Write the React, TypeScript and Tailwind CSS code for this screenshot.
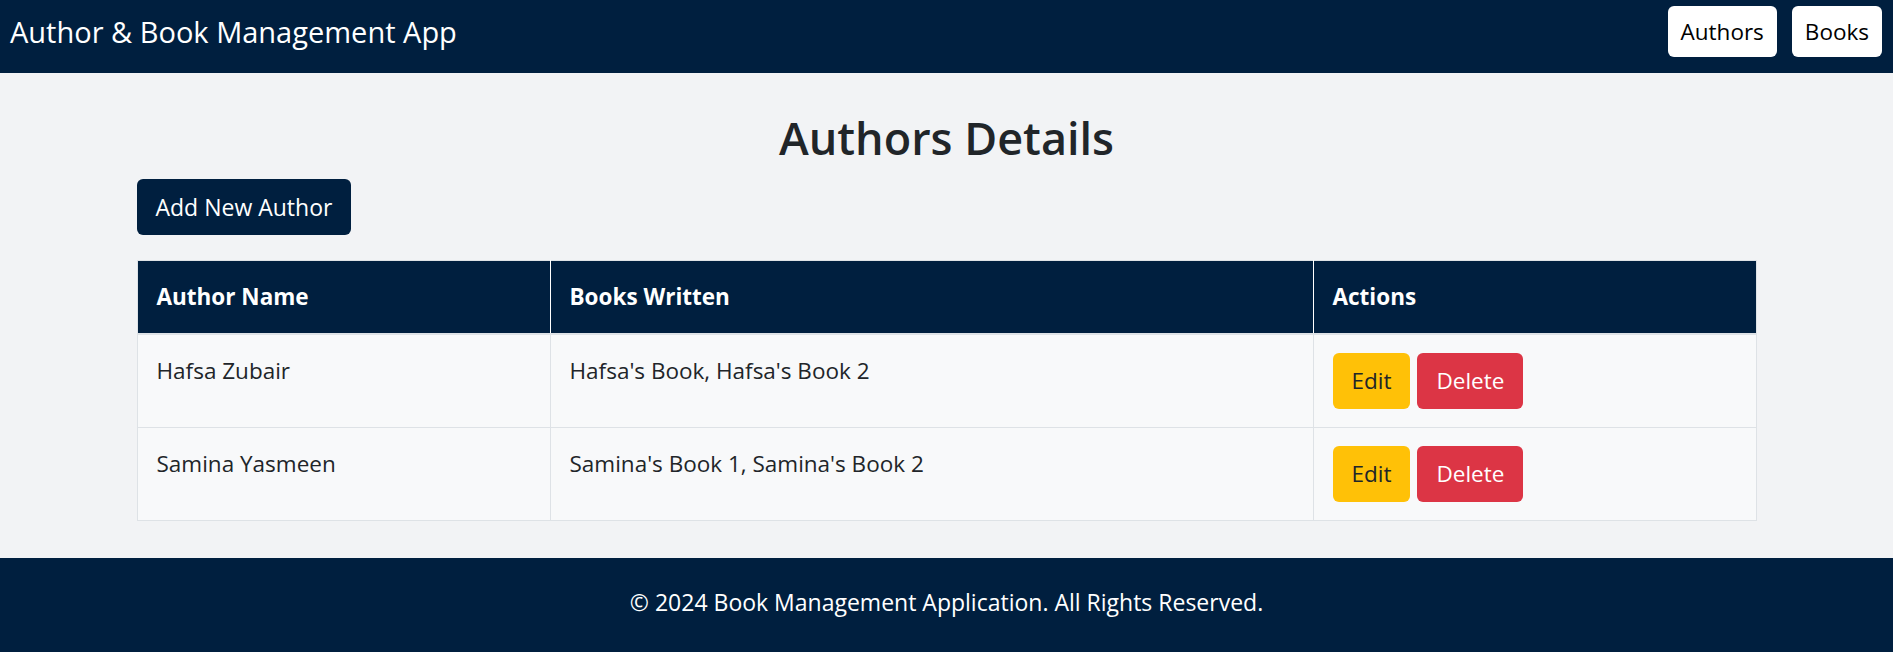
import React from "react";

const rows = [
  { name: "Hafsa Zubair", books: "Hafsa's Book, Hafsa's Book 2" },
  { name: "Samina Yasmeen", books: "Samina's Book 1, Samina's Book 2" },
];

export default function App() {
  return (
    <div
      className="min-h-screen flex flex-col bg-[#f2f3f5] text-[#212529]"
      style={{ fontFamily: '"Open Sans", "Noto Sans", sans-serif' }}
    >
      <header className="bg-[#001f3f] flex items-center justify-between pl-[10px] pr-[11px] pt-[6px] pb-[16px]">
        <h1 className="text-[29px] leading-[40px] text-white font-normal">
          Author &amp; Book Management App
        </h1>
        <nav className="flex gap-[15px]">
          <button className="h-[51px] px-[13px] bg-white text-black rounded-[6px] text-[22.5px] font-medium">
            Authors
          </button>
          <button className="h-[51px] px-[13px] bg-white text-black rounded-[6px] text-[22.5px] font-medium">
            Books
          </button>
        </nav>
      </header>

      <main className="flex-1 w-full max-w-[1650px] mx-auto px-[15px] pt-[38px] pb-[37px]">
        <h2 className="text-center text-[45px] leading-[53px] font-semibold text-[#212529]">
          Authors Details
        </h2>
        <button className="mt-[15px] h-[56px] px-[19px] bg-[#001f3f] text-white rounded-[6px] text-[23px]">
          Add New Author
        </button>

        <table className="mt-[25px] w-full table-fixed border border-[#dee2e6]">
          <colgroup>
            <col className="w-[413px]" />
            <col className="w-[763px]" />
            <col />
          </colgroup>
          <thead>
            <tr className="bg-[#001f3f] text-white h-[73px] border-b-2 border-[#dee2e6]">
              <th className="text-left font-bold text-[22.5px] px-[19px] border-r border-white">
                Author Name
              </th>
              <th className="text-left font-bold text-[22.5px] px-[19px] border-r border-white">
                Books Written
              </th>
              <th className="text-left font-bold text-[22.5px] px-[19px]">Actions</th>
            </tr>
          </thead>
          <tbody>
            {rows.map((r) => (
              <tr key={r.name} className="bg-[#f8f9fa] border-b border-[#dee2e6]">
                <td className="align-top px-[19px] py-[18px] text-[22.5px] leading-[36px] border-r border-[#dee2e6]">
                  {r.name}
                </td>
                <td className="align-top px-[19px] py-[18px] text-[22.5px] leading-[36px] border-r border-[#dee2e6]">
                  {r.books}
                </td>
                <td className="align-top px-[19px] py-[18px]">
                  <div className="flex gap-[7px]">
                    <button className="h-[56px] px-[19px] bg-[#ffc107] text-[#212529] rounded-[6px] text-[22.5px]">
                      Edit
                    </button>
                    <button className="h-[56px] px-[19px] bg-[#dc3545] text-white rounded-[6px] text-[22.5px]">
                      Delete
                    </button>
                  </div>
                </td>
              </tr>
            ))}
          </tbody>
        </table>
      </main>

      <footer className="bg-[#001f3f] text-white text-center text-[23px] leading-[36px] pt-[26px] pb-[33px]">
        © 2024 Book Management Application. All Rights Reserved.
      </footer>
    </div>
  );
}
